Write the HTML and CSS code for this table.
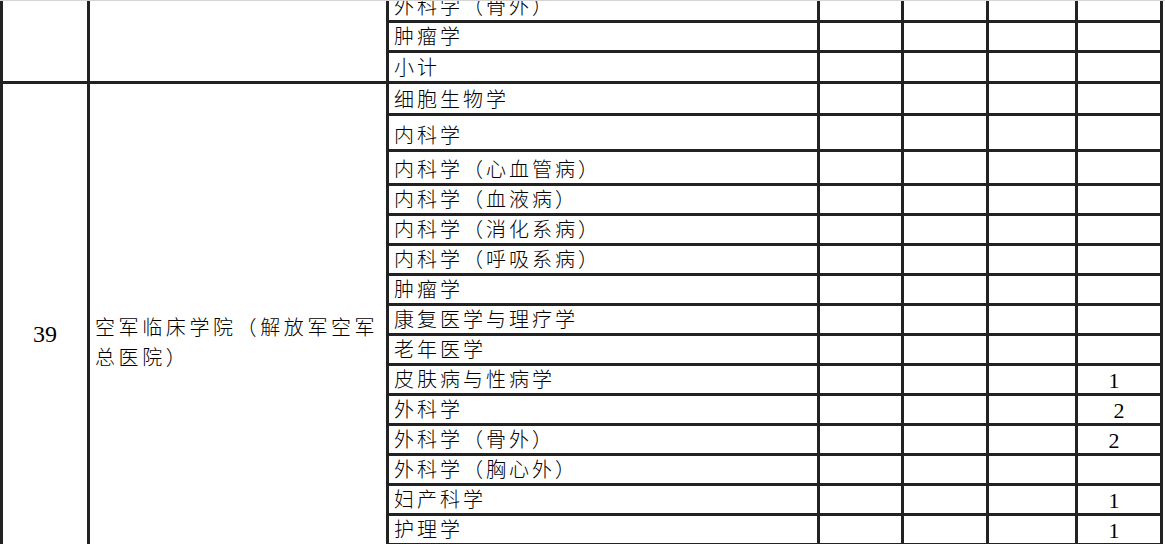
FILE: index.html
```html
<!DOCTYPE html>
<html lang="zh-CN">
<head>
<meta charset="utf-8">
<title>招生计划表</title>
<link rel="stylesheet" href="styles.css">
</head>
<body>
<div class="sheet">
<table class="grid">
<colgroup>
<col class="c-no"><col class="c-unit"><col class="c-major"><col class="c-a"><col class="c-b"><col class="c-c"><col class="c-d">
</colgroup>
<tbody>
<tr class="h30"><td class="no" rowspan="3"></td><td class="unit" rowspan="3"></td><td class="major">外科学（骨外）</td><td></td><td></td><td></td><td></td></tr>
<tr class="h30"><td class="major">肿瘤学</td><td></td><td></td><td></td><td></td></tr>
<tr class="h31"><td class="major">小计</td><td></td><td></td><td></td><td></td></tr>
<tr class="h32"><td class="no" rowspan="17">39</td><td class="unit" rowspan="17">空军临床学院（解放军空军<br>总医院）</td><td class="major">细胞生物学</td><td></td><td></td><td></td><td></td></tr>
<tr class="h36"><td class="major">内科学</td><td></td><td></td><td></td><td></td></tr>
<tr class="h34"><td class="major">内科学（心血管病）</td><td></td><td></td><td></td><td></td></tr>
<tr class="h30"><td class="major">内科学（血液病）</td><td></td><td></td><td></td><td></td></tr>
<tr class="h30"><td class="major">内科学（消化系病）</td><td></td><td></td><td></td><td></td></tr>
<tr class="h30"><td class="major">内科学（呼吸系病）</td><td></td><td></td><td></td><td></td></tr>
<tr class="h30"><td class="major">肿瘤学</td><td></td><td></td><td></td><td></td></tr>
<tr class="h30"><td class="major">康复医学与理疗学</td><td></td><td></td><td></td><td></td></tr>
<tr class="h30"><td class="major">老年医学</td><td></td><td></td><td></td><td></td></tr>
<tr class="h30"><td class="major">皮肤病与性病学</td><td></td><td></td><td></td><td class="num">1</td></tr>
<tr class="h30"><td class="major">外科学</td><td></td><td></td><td></td><td class="num num-mid">2</td></tr>
<tr class="h30"><td class="major">外科学（骨外）</td><td></td><td></td><td></td><td class="num">2</td></tr>
<tr class="h30"><td class="major">外科学（胸心外）</td><td></td><td></td><td></td><td class="num"></td></tr>
<tr class="h30"><td class="major">妇产科学</td><td></td><td></td><td></td><td class="num">1</td></tr>
<tr class="h30"><td class="major">护理学</td><td></td><td></td><td></td><td class="num">1</td></tr>
<tr class="h30"><td class="major"></td><td></td><td></td><td></td><td class="num"></td></tr>
<tr class="h30"><td class="major"></td><td></td><td></td><td></td><td class="num"></td></tr>
</tbody>
</table>
</div>
</body>
</html>
```
FILE: styles.css
```css
html, body {
  margin: 0;
  padding: 0;
  background: #ffffff;
}

body {
  font-family: "Liberation Serif", "Noto Sans CJK SC", serif;
  color: #000000;
}

.sheet {
  position: relative;
  width: 1165px;
  height: 544px;
  overflow: hidden;
  background: #ffffff;
}

.sheet::after {
  content: "";
  position: absolute;
  left: 0;
  top: 0;
  width: 100%;
  height: 1px;
  background: #d4d4d4;
}

.grid {
  border-collapse: collapse;
  table-layout: fixed;
  width: 1160px;
  margin-top: -10px;
}

.c-no { width: 87px; }
.c-unit { width: 299px; }
.c-major { width: 431px; }
.c-a { width: 84px; }
.c-b { width: 85px; }
.c-c { width: 89px; }
.c-d { width: 85px; }

.grid td {
  border: 3px solid #222222;
  padding: 0;
  overflow: hidden;
  white-space: nowrap;
}

.h30 { height: 30px; }
.h31 { height: 31px; }
.h32 { height: 32px; }
.h34 { height: 34px; }
.h36 { height: 36px; }

.major {
  font-family: "Noto Sans CJK SC", sans-serif;
  font-size: 20px;
  font-weight: 300;
  line-height: 20px;
  letter-spacing: 3px;
  padding: 0 0 4px 5px !important;
  vertical-align: bottom;
  text-align: left;
}

.unit {
  font-family: "Noto Sans CJK SC", sans-serif;
  font-size: 20px;
  font-weight: 300;
  line-height: 30px;
  letter-spacing: 3.6px;
  padding: 0 0 3px 5px !important;
  vertical-align: middle;
  text-align: left;
}

.no {
  font-family: "Liberation Serif", serif;
  font-size: 24px;
  line-height: 30px;
  text-align: center;
  vertical-align: middle;
  padding: 0 0 19px 0 !important;
}

.num {
  font-family: "Liberation Serif", serif;
  font-size: 22px;
  line-height: 20px;
  text-align: center;
  vertical-align: bottom;
  padding: 0 10px 2px 0 !important;
}

.num-mid {
  padding-right: 0 !important;
}
```
